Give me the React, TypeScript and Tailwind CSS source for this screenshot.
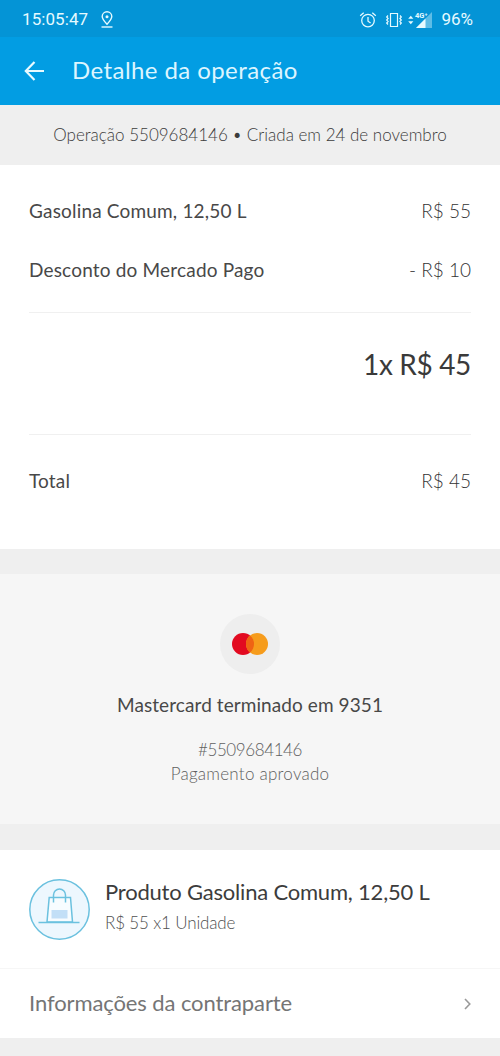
import type { ReactNode } from 'react';

function StatusBar() {
  return (
    <div className="flex h-[37px] items-center justify-between bg-[#0494d6] pl-[22px] pr-[27px] font-['Roboto',sans-serif] text-[17px] text-[#e6faff]">
      <div className="flex items-center gap-[12px] pt-[2px]">
        <span className="tracking-[0.08px]">15:05:47</span>
        <svg width="14" height="18" viewBox="0 0 14 18" fill="none" stroke="currentColor" strokeWidth="1.4">
          <path d="M7 13.2C4.2 10.3 2.2 8 2.2 5.600a4.8 4.8 0 0 1 9.6 0C11.8 8 9.800 10.300 7 13.200Z" />
          <circle cx="7" cy="5.800" r="1.500" fill="currentColor" stroke="none" />
          <path d="M1.500 16h11" />
        </svg>
      </div>
      <div className="flex items-center pt-[2px]">
        <svg width="18" height="18" viewBox="0 0 18 18" fill="none" stroke="currentColor" strokeWidth="1.300">
          <circle cx="9" cy="9.600" r="6.300" />
          <path d="M9 6v4.200l2.600 1.800M1.200 4.800l3.500-3M16.800 4.800l-3.500-3" />
        </svg>
        <svg className="ml-[8px]" width="18" height="18" viewBox="0 0 18 18" fill="none" stroke="currentColor" strokeWidth="1.200">
          <path d="M5.500 2.500h7v13h-7z" />
          <path d="M3 4.500 1.700 6l1.400 1.500L1.700 9l1.400 1.500L1.700 12 3 13.500M15 4.500 16.300 6l-1.400 1.500L16.300 9l-1.400 1.500 1.400 1.500-1.300 1.500" />
        </svg>
        <svg className="ml-[4px]" width="27" height="18" viewBox="0 0 27 18" fill="currentColor">
          <path d="m1.200 7.800 2.600-3 2.600 3zM1.200 10.200l2.600 3 2.600-3z" />
          <path d="M25 1v16H9z" opacity=".4" />
          <path d="M18.500 7.500V17H9z" />
          <text x="8" y="7" fontSize="7.500" fontWeight="700">4G⁺</text>
        </svg>
        <span className="ml-[7px]">96%</span>
      </div>
    </div>
  );
}

function Row({ label, value }: { label: string; value: string }) {
  return (
    <div className="flex h-[59px] items-center justify-between text-[19px]">
      <span className="text-[#484848] tracking-[0.18px]">{label}</span>
      <span className="font-light text-[#333]">{value}</span>
    </div>
  );
}

function Panel({ className, children }: { className: string; children: ReactNode }) {
  return <section className={className}>{children}</section>;
}

export default function App() {
  return (
    <div className="h-[1056px] w-[500px] overflow-hidden bg-[#efefef] font-['Lato',sans-serif]">
      <StatusBar />
      <header className="flex h-[68px] items-center bg-[#029de3] pl-[24px] text-[#e8faff]">
        <svg width="21" height="20" viewBox="0 0 21 20" fill="none" stroke="currentColor" strokeWidth="2.200">
          <path d="M20 10H2M10.500 1 1.800 10l8.700 9" />
        </svg>
        <h1 className="ml-[27px] pb-[2px] text-[24px] tracking-[0.42px] text-[#dcf5ff]">Detalhe da operação</h1>
      </header>
      <p className="flex h-[60px] items-center justify-center text-[17px] font-light text-[#3c3c3c]">
        Operação 5509684146 • Criada em 24 de novembro
      </p>

      <Panel className="h-[384px] bg-white px-[29px] pt-[17px]">
        <Row label="Gasolina Comum, 12,50 L" value="R$ 55" />
        <Row label="Desconto do Mercado Pago" value="- R$ 10" />
        <div className="mt-[12px] flex h-[123px] items-center justify-end border-y border-[#f0f0f0] pb-[20px] text-[28px] tracking-[-0.35px] text-[#3a3a3a]">
          1x R$ 45
        </div>
        <div className="pt-[17px]">
          <Row label="Total" value="R$ 45" />
        </div>
      </Panel>

      <Panel className="mt-[25px] flex h-[250px] flex-col items-center bg-[#f6f6f6] pt-[40px]">
        <div className="flex size-[60px] items-center justify-center rounded-full bg-[#eee]">
          <svg width="36" height="22" viewBox="0 0 36 22">
            <circle cx="11" cy="11" r="11" fill="#e20a20" />
            <circle cx="25" cy="11" r="11" fill="#f69c1c" />
            <path d="M18 2.500a11 11 0 0 1 0 17 11 11 0 0 1 0-17Z" fill="#ef6414" />
          </svg>
        </div>
        <h2 className="mt-[17px] text-[19px] leading-[28px] tracking-[0.08px] text-[#484848]">Mastercard terminado em 9351</h2>
        <p className="mt-[19px] text-[17px] font-light leading-[24px] tracking-[-0.4px] text-[#606060]">#5509684146</p>
        <p className="text-[17px] font-light leading-[24px] tracking-[0.25px] text-[#606060]">Pagamento aprovado</p>
      </Panel>

      <Panel className="mt-[26px] bg-white">
        <div className="flex h-[119px] items-center border-b border-[#f6f6f6] pl-[29px]">
          <svg width="61" height="61" viewBox="0 0 61 61" fill="none" stroke="#6bc1df" strokeWidth="1.500">
            <circle cx="30.500" cy="30.500" r="29.700" fill="#edf7fe" />
            <path d="M20.200 18.500h21.300L43.500 43H18z" fill="#f7fcff" />
            <path d="M22.500 31h16v8.500h-16z" fill="#c2dff7" stroke="none" />
            <path d="M24.500 23.500V16a6 6 0 0 1 12 0v7.500M9.500 43.500h41" />
          </svg>
          <div className="ml-[15px] pb-[5px]">
            <h3 className="text-[22px] leading-[30px] tracking-[-0.2px] text-[#3c3c3c]">Produto Gasolina Comum, 12,50 L</h3>
            <p className="mt-[3px] text-[17px] font-light leading-[26px] tracking-[-0.15px] text-[#505050]">R$ 55 x1 Unidade</p>
          </div>
        </div>
        <div className="flex h-[69px] items-center justify-between px-[29px] text-[22px] text-[#757575]">
          <span className="pb-[2px] tracking-[-0.1px]">Informações da contraparte</span>
          <svg width="7" height="12" viewBox="0 0 7 12" fill="none" stroke="#999" strokeWidth="1.600">
            <path d="m1 1 4.800 5L1 11" />
          </svg>
        </div>
      </Panel>
    </div>
  );
}
